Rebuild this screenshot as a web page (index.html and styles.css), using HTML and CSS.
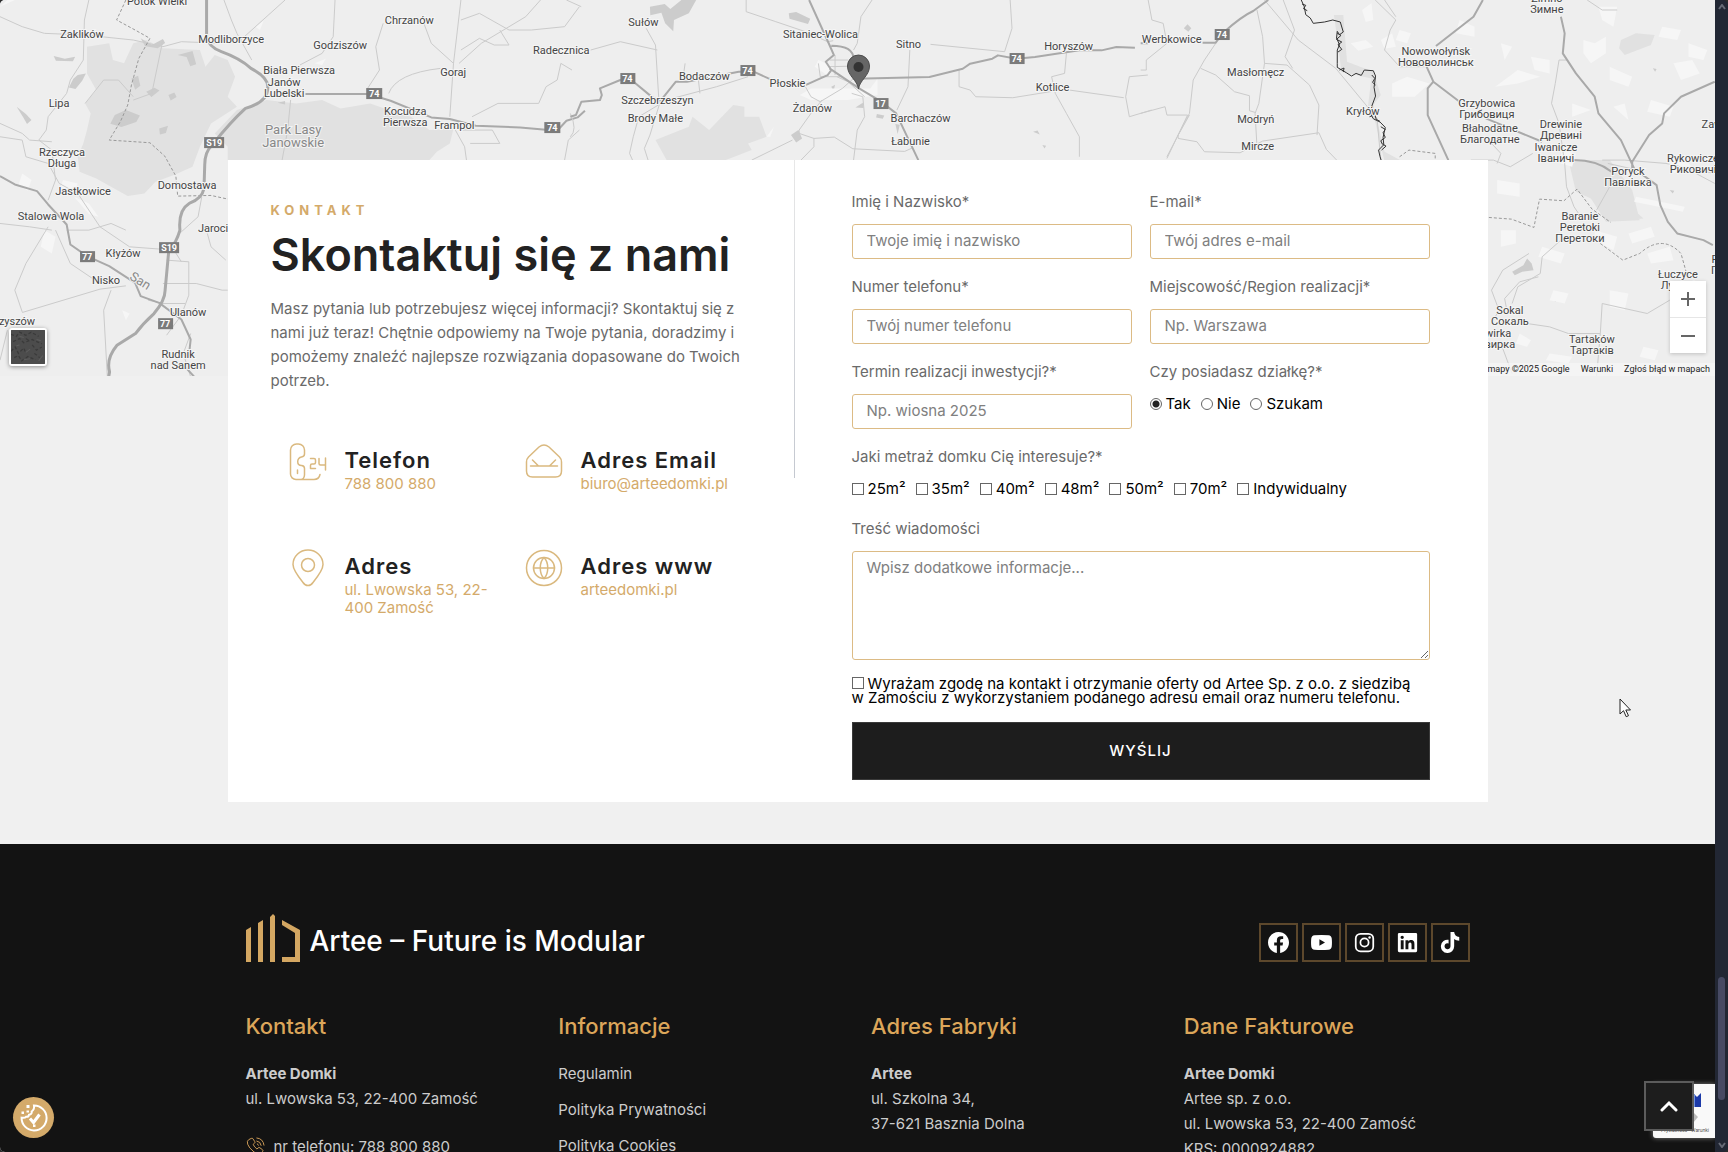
FILE: index.html
```html
<!DOCTYPE html>
<html lang="pl">
<head>
<meta charset="utf-8">
<title>Artee – Kontakt</title>
<meta name="viewport" content="width=device-width, initial-scale=1">
<link rel="stylesheet" href="styles.css">
</head>
<body>
<div class="window">
<div class="page">
  <section class="map" aria-label="Mapa">
    <svg class="map-canvas" viewBox="0 0 1714 376" preserveAspectRatio="xMidYMin slice">
      <rect width="1714" height="376" fill="#eeeeee"/>
      <!-- west -->
      <g transform="scale(.37 .33333)">
        <g class="forest">
          <path d="M235 140L295 130 305 180 335 190 360 130 395 120 440 145 540 150 555 200 580 165 615 180 635 230 615 290 640 320 570 370 540 440 520 500 470 525 420 545 390 580 345 588 300 560 260 535 215 515 210 470 225 430 235 390 245 340 230 310 260 270 235 220Z"/>
          <path d="M720 300L800 310 870 300 920 325 1000 310 1050 330 1110 350 1160 390 1225 385 1215 430 1180 455 1160 480H615V440L580 400 640 330Z"/>
        </g>
        <g class="lake">
          <path d="M210 225l22-5-10 22-18 25-18-5 12-26zM310 345l30-15 38 16-10 20-40 15-30-10zM480 165l40-12 10 40-16 6-10-28zM395 275l22-12 14 8-22 20zM430 385l24-8-6 22-16 4zM455 285l16-8 6 14-16 10zM355 235l18-8 6 30-14 12zM45 320l25 22 15 18-12 12-10-20zM145 168l30 8 28-6-6 14-46-2zM750 308l20-5v10zM380 115l30 20 30-18 6 12-20 16-34-6z"/>
        </g>
        <g class="patch"><path d="M60 520l25 20-10 32-25-18zM170 540l40 10-8 30-40-10zM120 690l30 20-10 50-30-20zM850 190l30-14-10 20zM690 80l22-18-10 28zM200 590l40 20 26 40-26-8zM330 930l20 10-10 20zM0 20l20-20h20z"/></g>
        <g class="minor">
          <path d="M240 0L228 60 225 180 190 240 180 280 130 350 125 390 105 420 140 450 150 540 130 600M0 50l60 30 60 20 110 5 130 15 80 20 50-15 90 4 60-18M605 0l20 60 15 40 40 80M770 0l-60 60-60 60M905 0l-5 110-30 50-60 35M0 370l60 30 20 20 60 5M0 410l60 10 10 50 60 20 30 60 50 30 60 100 80 60 120 10 20 35M785 300l-8 90-15 90M990 270l35-60-10-70 20-70M1050 280q20-60 140-75M1225 190l20-190M1225 190l-60-60-20-60M1240 190l60-60 120-80 40-50M1225 190l-10 160M1245 60l50-20 80 50 60 0 90-10 40-60M1350 90l25 45-40 0-40-20-50 35M1545 210l-30-20-10 50-30 20-20 50-110 0-70 40M1230 390l25 50 5 40M1250 390l80 0 20 40-80 0M1530 0l40 20M1525 480l10-60 30-30M0 670l80 10 60 10M130 680l-60 110-30 80 20 65M60 937l210-70 70-10M150 690l40 100 80 60M440 850l90 0 70 20h15M450 780l60 5 0 100-20 60-40 60M290 1130l-10-200 20-60M545 590l-10 60-60 60M560 700l10 40 40 40M400 900l40 10 60 0M180 690l60 0 60-20 40 20M515 1000l-20 60 20 70M640 490l-10 20M0 1080l20-90"/>
          <path d="M230 310l50-70 40 0 40 50M440 120l-30 160-50 20"/>
        </g>
        <path class="dash" d="M340 0l-25 60 50 30 40 25-30 60-20 80-10 60-20 50-30 55 110 8 40 40 30 60 5 60 90-2 50 12h40"/>
        <g class="major">
          <path d="M0 528l40 25 60 20 30 40 50 60 10 60 45 35 60 30 70 50 15 40 50 20 60 50 25 60 -5 50M825 282h170l60 20 110 50 50 5 70 20 120 5 100 10 25-30 30-10 20-20M500 1100l25 30"/>
        </g>
        <g class="motorway"><path d="M558 0v110q5 30 40 45 50 20 80 50 50 30 45 60 0 40-60 60-40 40-90 110-20 20-20 60l-2 70q-5 30-40 45-30 20-25 80-10 40-30 60l-10 120q0 30-30 70-30 30-50 60l-50 35q-30 40-20 80l-10 60"/></g>
      </g>
      <!-- centre -->
      <g transform="translate(570) scale(.37 .33333)">
        <g class="forest"><path d="M230 420L320 380 330 350 375 390 440 315 470 320 470 350 510 350 530 410 480 430 490 450 420 480H260z"/></g>
        <g class="lake"><path d="M215 20l40-8 15 15 30-27h40l-20 40-40 20-2 34-22-24-10-32-30 8zM590 40l20-4 38 20-6 16-50-16zM596 405l20-15 10 25-16 12zM770 322l20-14 2 16zM828 342l20 4-4 10-18-4zM878 372l12 2-6 28zM1250 395l12-4 6 12zM1275 435l10 2-4 8zM705 260l10-6-4 20z"/></g>
        <g class="patch"><path d="M620 285l30-20 160 0 20-30 0 50-80 15-100 0zM530 410l20-30-10 30zM660 200l10-20 40 20-10 30z"/></g>
        <g class="minor">
          <path d="M475 0v35l80 30 80 30 60 30 15-3M815 0l-30 50-10 80-10 20M1188 0l5 85-20 70-200-22M1050 210v50l30 10 15 20 100 3 140-25 160 25M917 150l-5 110-30 70M1340 160l-5 60-35 10 10 50 30 60 35 70v60M1560 225l-50 5-10 60 10 60 60-20M205 85l25 50 10 180M55 150l80-25 100 25M245 310l-60 40-15 60-10 50 8 20M240 315l-25 90-15 40 10 35M225 310l170-50 85-30M345 230l5 50M635 260l15 30 25 15 60-40 30-30M680 300l-30 40-32 50 0 10 40 15 0 25-35 40M490 480l110-60M658 415l55-4 50 35 140 8 20-10M760 280l30 10 5 60-20 40-10 90M670 190l5 40 60 0 60 60M715 165v60M310 190l-5 40M0 340q20 50 0 70"/>
          <path d="M700 200l70-2M700 180l50 0M720 230l60 30"/>
        </g>
        <g class="major">
          <path d="M0 350l15-5 15-40 50-5 5-15-5-20 55-25h30l60 55 20 5 40-55h30l140-30h40l40 20 15 5M635 255l60-30 10-15-15-25 22-20-12-30-55-135M705 137q60 0 60 40M770 236l200-5 90-25 20-15 60-15 15-10 50 10 50-5 120-20h60l40-10 50 2M700 205l80 60 60 40 40 35 60 140"/>
        </g>
      </g>
      <!-- east -->
      <g transform="translate(1140) scale(.375 .33333)">
        <g class="forest"><path d="M515 45h25l10 140 70 30 20 70-20 30 30 140 50 30h-50l-25-120-20-40 10-90-80-20-10-90zM1140 480h110l60 90 20 90-90 5-40-70-40-20zM1280 120l40-20 50 5-10 30-70 30-15-20zM1240 665l20-50 60 20 20 20z"/></g>
        <g class="lake"><path d="M115 85l10-12 10 12-8 10zM990 815l30-20 10-20 12 15 5 20-30 5-20 10zM1410 570l12 2-4 8zM1365 205l10 2-4 8zM1100 900l10-5-4 10z"/></g>
        <g class="patch">
          <path d="M560 130l40-10 20 20-40 12zM640 120l30-20 10 40-30 6zM590 30l25-20 5 50-20 6zM690 90l30 10-10 30-30-10zM850 60l40 20 0 30-50-10zM945 260l60-50 60 20-60 20zM1040 170l50 10 0 40-40-10zM960 130l30 10-20 40zM1180 120l30 10 30-20 0 50-40 30-20-30zM1250 200l60 30-10 30-50-20zM1420 190l50-10 20 40-50 20zM1360 300l60 20-10 30-60-15zM1220 20l50 0-10 60-30-20zM1390 80l50 10-10 30-50-10zM1460 130l50 20-10 30-40-10zM1120 450l40 10-10 40-30-10zM950 540l60 10 0 40-60-10zM1320 590l130 30-5 15-130-30zM1070 740l60 20-10 30-60-20zM1210 690l60 20-10 40-50-30zM1300 700l60-20 10 30-60 20zM1350 760l60-20 10 40-60 10zM960 690l40 0 0 40-40 10zM1100 870l40 10-10 30-40-10zM1250 870l50 10-10 50-40-10zM1400 480l40-10 30 30-50 20zM1090 1060l60 10-10 20-60-10zM1340 1040l40 10-10 30-40-10zM1200 330l-50-20 0 40zM670 250l40-20 60 20-40 40-60 0zM1010 1000l30 20-10 20-30-10zM1300 360l-40-40 30-10z"/>
        </g>
        <g class="minor">
          <path d="M310 30l15 80 5 80-15 120-10 30 5 100M330 0l90 120 100 85 110 150 10 125M0 210h15v-30l55-50-10-60-30-10-10-60M0 340l65-20 5 25 55 0-55 130M70 470l60-130 10-100 30-60 30-50M130 345l-30 60 0 10 50 10 20 30 95 3 60-35 150-25 20 50 60 70M160 205l40 20 50 50 40 12 0 45 15 5M330 190l60 5 60 60 25 60-5 90M380 0l30 90-25 80 20 35M625 0l55 60-15 30-15 60 40 50 70 0M650 0l30 50M1135 180h-20l-10 70-10 60 20 60 15 120 5 70 20 60 15 25M880 480l60 0 45 20 60-40M935 430l25 30-10 30M1230 480h60l110 10 80 20 50 10M1120 720l-50 50-5 50-60 40-15 50M1060 830l-50 15-40 50 5 30M1030 970l60 10 50 20 85 0M1225 1000l5-90 120 30 60-40M1225 1000l-10 130M960 1030l30 90M1255 550l-40 80M935 870l30-60 70-50M1245 490l80 20M1480 520l50 30M1190 0l40 30 40 0M935 870l20 60-20 40"/>
        </g>
        <path class="dash" d="M928 652l60 5 60 25 15-85 65 5 35-35 40 60 50 40M1225 730l60 50 45-20q60-60 110 0l15 60M690 470l25-20 70 10 0 20"/>
        <g class="major">
          <path d="M0 130l20 0M165 128h35l20-30q50-50 80-65l40-33M912 0l-25 50-100 88M762 200l18 45-15 20v80l55 135M780 245l70 60M920 355l150 70M1155 480q60 0 100 35M1120 50l10 50-5 60 35 60 50 70 10 50 60 80 35 85 60 50 10 60 20 50 25 35 70 20 25 15M1310 485l45-80 35-35 5-30 45-50 90-45M1310 480v30"/>
        </g>
        <path class="border" d="M428 0l8 20 4 24 12 10 8 16 30-4 22-6 20 6 8 30-10 8-6-10-2 20 8 20-6 16 0 40 0 12 24 16 14 10 12-8 14 6 8-16 24 2 6 16-4 34 4 26-10 30-2 26 6 12 18 10 14 16-6 30 2 22-14 16 4 20 8 28"/>
        <path class="border" d="M430 12l10 4-6 10 10 6M524 100l10 6-12 12 14 8-10 8 10 14-10 8M530 210l12-6-2 12M616 225l8 10-6 12 8 8M610 350l14-6 4 14 10 6M640 380l12 8-6 10 6 14-12 10 4 10 10 6-12 12"/>
      </g>
      <g class="shield">
        <rect x="366" y="88" width="16" height="11"/><rect x="544" y="122" width="16" height="11"/><rect x="204" y="137" width="20" height="11"/><rect x="159" y="242" width="20" height="11"/><rect x="80" y="251" width="15" height="11"/><rect x="158" y="318" width="15" height="11"/><rect x="620" y="73" width="15" height="11"/><rect x="740" y="65" width="15" height="11"/><rect x="1009" y="53" width="15" height="11"/><rect x="873" y="98" width="15" height="11"/><rect x="1214" y="29" width="15" height="11"/>
      </g>
      <g class="shield-text">
        <text x="374" y="97">74</text><text x="552" y="131">74</text><text x="214" y="146">S19</text><text x="169" y="251">S19</text><text x="87" y="260">77</text><text x="165" y="327">77</text><text x="627" y="82">74</text><text x="747" y="74">74</text><text x="1016" y="62">74</text><text x="880" y="107">17</text><text x="1221" y="38">74</text>
      </g>
      <g class="place">
        <text x="157" y="5">Potok Wielki</text><text x="82" y="38">Zaklików</text><text x="231" y="43">Modliborzyce</text><text x="340" y="49">Godziszów</text><text x="409" y="24">Chrzanów</text><text x="561" y="54">Radecznica</text><text x="299" y="74">Biała Pierwsza</text><text x="284" y="86">Janów</text><text x="284" y="97">Lubelski</text><text x="453" y="76">Goraj</text><text x="59" y="107">Lipa</text><text x="405" y="115">Kocudza</text><text x="405" y="126">Pierwsza</text><text x="454" y="129">Frampol</text><text x="62" y="156">Rzeczyca</text><text x="62" y="167">Długa</text><text x="187" y="189">Domostawa</text><text x="83" y="195">Jastkowice</text><text x="51" y="220">Stalowa Wola</text><text x="216" y="232">Jarocin</text><text x="123" y="257">Kłyżów</text><text x="106" y="284">Nisko</text><text x="188" y="316">Ulanów</text><text x="17" y="325">zyszów</text><text x="178" y="358">Rudnik</text><text x="178" y="369">nad Sanem</text>
        <text x="643" y="26">Sułów</text><text x="820" y="38">Sitaniec-Wolica</text><text x="908" y="48">Sitno</text><text x="1068" y="50">Horyszów</text><text x="704" y="80">Bodaczów</text><text x="787" y="87">Płoskie</text><text x="1052" y="91">Kotlice</text><text x="657" y="104">Szczebrzeszyn</text><text x="655" y="122">Brody Małe</text><text x="812" y="112">Żdanów</text><text x="920" y="122">Barchaczów</text><text x="910" y="145">Łabunie</text>
        <text x="1171" y="43">Werbkowice</text><text x="1255" y="76">Masłomęcz</text><text x="1255" y="123">Modryń</text><text x="1257" y="150">Mircze</text><text x="1362" y="115">Kryłów</text><text x="1435" y="55">Nowowołyńsk</text><text x="1435" y="66">Нововолинськ</text><text x="1546" y="2">Zimno</text><text x="1546" y="13">Зимне</text><text x="1486" y="107">Grzybowica</text><text x="1486" y="118">Грибовиця</text><text x="1489" y="132">Błahodatne</text><text x="1489" y="143">Благодатне</text><text x="1560" y="128">Drewinie</text><text x="1560" y="139">Древині</text><text x="1555" y="151">Iwanicze</text><text x="1555" y="162">Іваничі</text><text x="1692" y="162">Rykowicze</text><text x="1692" y="173">Риковичі</text><text x="1627" y="175">Poryck</text><text x="1627" y="186">Павлівка</text><text x="1579" y="220">Baranie</text><text x="1579" y="231">Peretoki</text><text x="1579" y="242">Перетоки</text><text x="1677" y="278">Łuczyce</text><text x="1677" y="289">Лучиці</text><text x="1509" y="314">Sokal</text><text x="1509" y="325">Сокаль</text><text x="1494" y="337">Żwirka</text><text x="1494" y="348">Жвирка</text><text x="1591" y="343">Tartaków</text><text x="1591" y="354">Тартаків</text><text x="1711" y="128">Zaw</text><text x="1714" y="263">P</text><text x="1714" y="274">П</text>
      </g>
      <g class="park"><text x="293" y="134">Park Lasy</text><text x="293" y="147">Janowskie</text><text x="140" y="285" transform="rotate(32 140 281)">San</text></g>
      <path d="M858 89C857 80 847 76 847 66a11 11 0 0 1 22 0c0 10-10 14-11 23z" fill="#666" stroke="#4b4b4b"/>
      <circle cx="858" cy="67" r="5" fill="#333"/>
    </svg>
    <button class="layer" type="button" aria-label="Widok satelitarny">
      <svg viewBox="0 0 32 32"><rect width="32" height="32" fill="#4c4c4c"/><path d="M0 4l5 2 3-4 6 3 5-3 7 4M2 11l6-3 4 4 8-3 9 4M0 20l4-4 3 6 5-5 2 5M3 26l4-2 3 5 6-4 7 3M20 14l4 5 5-3M14 8l3 2M22 22l5 4" stroke="#3a3a3a" stroke-width="1.2" stroke-dasharray="3 2" fill="none"/><path d="M8 6l4 1M18 18l-4 3M24 9l4 1M12 28l6-1M26 29l4-5M5 15l3-1" stroke="#5c5c5c" fill="none"/></svg>
    </button>
    <div class="zoom">
      <button type="button" aria-label="Powiększ"><svg viewBox="0 0 16 16"><path d="M8 1v14M1 8h14"/></svg></button>
      <button type="button" aria-label="Pomniejsz"><svg viewBox="0 0 16 16"><path d="M1 8h14"/></svg></button>
    </div>
    <div class="legal"><span>Dane mapy ©2025 Google</span><a href="#">Warunki</a><a href="#">Zgłoś błąd w mapach</a></div>
  </section>

  <main class="contact">
    <section class="intro">
      <p class="eyebrow">KONTAKT</p>
      <h1>Skontaktuj się z nami</h1>
      <p class="lead">Masz pytania lub potrzebujesz więcej informacji? Skontaktuj się z<br>nami już teraz! Chętnie odpowiemy na Twoje pytania, doradzimy i<br>pomożemy znaleźć najlepsze rozwiązania dopasowane do Twoich<br>potrzeb.</p>
      <div class="cards">
        <article class="item">
          <svg class="item-icon" viewBox="0 0 38 38"><path d="M15.500 7a6 6 0 0 0-6-6h-2a6 6 0 0 0-6 6v24a5.500 5.500 0 0 0 5.500 5.500h18q5 0 6-5M15.500 7v4q0 2.500-3 3-3.500.6-3.800 4.500 0 4 3.800 4 3 .2 3 3V32q-.3 4-3.500 4.500M8.500 27v3.500"/><path d="M21.500 15.500H25q1.500 0 1.500 1.500v2.500q0 1.500-1.500 1.500h-2q-1.500 0-1.500 1.500v3h5M30 15.500v5q0 1.500 1.500 1.500h5M36.500 15v12"/></svg>
          <div><h2>Telefon</h2><a href="tel:788800880">788 800 880</a></div>
        </article>
        <article class="item">
          <svg class="item-icon" viewBox="0 0 38 38"><path d="M1.500 19q0-3 2-5L14 4q5-4 10 0l10.500 10q2 2 2 5v9q0 6-6 6h-23q-6 0-6-6zM5.500 23h27M7.500 17l6 6M30.500 17l-6 6"/></svg>
          <div><h2>Adres Email</h2><a href="mailto:biuro@arteedomki.pl">biuro@arteedomki.pl</a></div>
        </article>
        <article class="item">
          <svg class="item-icon" viewBox="0 0 38 38"><path d="M19 36.500q-3 0-5-3Q4 21 4 15.500a15 14.500 0 0 1 30 0Q34 21 24 33.500q-2 3-5 3z"/><circle cx="19" cy="16" r="6.500"/></svg>
          <div><h2>Adres</h2><a href="#">ul. Lwowska 53, 22-<br>400 Zamość</a></div>
        </article>
        <article class="item">
          <svg class="item-icon" viewBox="0 0 38 38"><circle cx="19" cy="19" r="17.500"/><circle cx="19" cy="19" r="10.500"/><path d="M8.500 19h21M19 8.500c-5 5-5 16 0 21M19 8.500c5 5 5 16 0 21"/></svg>
          <div><h2>Adres www</h2><a href="#">arteedomki.pl</a></div>
        </article>
      </div>
    </section>

    <form class="form">
      <div class="field"><label for="name">Imię i Nazwisko*</label><input id="name" type="text" placeholder="Twoje imię i nazwisko"></div>
      <div class="field"><label for="mail">E-mail*</label><input id="mail" type="email" placeholder="Twój adres e-mail"></div>
      <div class="field"><label for="tel">Numer telefonu*</label><input id="tel" type="tel" placeholder="Twój numer telefonu"></div>
      <div class="field"><label for="region">Miejscowość/Region realizacji*</label><input id="region" type="text" placeholder="Np. Warszawa"></div>
      <div class="field"><label for="term">Termin realizacji inwestycji?*</label><input id="term" type="text" placeholder="Np. wiosna 2025"></div>
      <fieldset class="field"><legend>Czy posiadasz działkę?*</legend>
        <div class="options">
          <label><input type="radio" name="plot" checked>Tak</label><label><input type="radio" name="plot">Nie</label><label><input type="radio" name="plot">Szukam</label>
        </div>
      </fieldset>
      <fieldset class="field wide"><legend>Jaki metraż domku Cię interesuje?*</legend>
        <div class="options">
          <label><input type="checkbox">25m²</label><label><input type="checkbox">35m²</label><label><input type="checkbox">40m²</label><label><input type="checkbox">48m²</label><label><input type="checkbox">50m²</label><label><input type="checkbox">70m²</label><label><input type="checkbox">Indywidualny</label>
        </div>
      </fieldset>
      <div class="field wide"><label for="msg">Treść wiadomości</label><textarea id="msg" placeholder="Wpisz dodatkowe informacje..."></textarea></div>
      <label class="consent wide"><input type="checkbox">Wyrażam zgodę na kontakt i otrzymanie oferty od Artee Sp. z o.o. z siedzibą<br>w Zamościu z wykorzystaniem podanego adresu email oraz numeru telefonu.</label>
      <button class="submit wide" type="submit">WYŚLIJ</button>
    </form>
  </main>

  <footer class="footer">
    <div class="footer-inner">
      <div class="brand-row">
        <a class="brand" href="#">
          <svg viewBox="0 0 54 48"><path d="M0 16l5-3v35H0zM12 9l5-3v42h-5zM24 3l3-3 2 2v46h-5zM36 6l18 10v32H36v-5h13V19L36 11z"/></svg>
          <span>Artee – Future is Modular</span>
        </a>
        <nav class="social" aria-label="Media społecznościowe">
          <a href="#" aria-label="Facebook"><svg viewBox="0 0 24 24"><path fill-rule="evenodd" d="M24 12.070C24 5.400 18.630 0 12 0S0 5.400 0 12.070C0 18.100 4.390 23.090 10.130 24v-8.440H7.080v-3.490h3.050V9.410c0-3.020 1.790-4.690 4.530-4.690 1.310 0 2.680.24 2.680.24v2.970h-1.510c-1.490 0-1.960.93-1.960 1.890v2.250h3.330l-.53 3.490h-2.800V24C19.610 23.090 24 18.100 24 12.070z"/></svg></a>
          <a href="#" aria-label="YouTube"><svg viewBox="0 0 24 24"><path fill-rule="evenodd" d="M4 3.800Q12 3.200 20 3.800 23.300 4 23.700 7.500q.5 4.500 0 9-.4 3.500-3.700 3.700-8 .6-16 0Q.7 20 .3 16.500q-.5-4.500 0-9Q.7 4 4 3.800zM9.600 8.300v7.400L16 12z"/></svg></a>
          <a href="#" aria-label="Instagram"><svg viewBox="0 0 24 24"><path fill-rule="evenodd" d="M7.500 1h9A6.500 6.500 0 0 1 23 7.500v9a6.500 6.500 0 0 1-6.500 6.500h-9A6.500 6.500 0 0 1 1 16.500v-9A6.500 6.500 0 0 1 7.500 1zm0 2A4.500 4.500 0 0 0 3 7.500v9A4.500 4.500 0 0 0 7.500 21h9a4.500 4.500 0 0 0 4.500-4.500v-9A4.500 4.500 0 0 0 16.500 3zM12 6.300a5.700 5.700 0 1 1 0 11.400 5.700 5.700 0 0 1 0-11.400zm0 2a3.700 3.700 0 1 0 0 7.400 3.700 3.700 0 0 0 0-7.400z"/><circle cx="17.800" cy="6.200" r="1.400"/></svg></a>
          <a href="#" aria-label="LinkedIn"><svg viewBox="0 0 24 24"><path fill-rule="evenodd" d="M2.500 1h19A1.500 1.500 0 0 1 23 2.500v19a1.500 1.500 0 0 1-1.500 1.500h-19A1.500 1.500 0 0 1 1 21.500v-19A1.500 1.500 0 0 1 2.500 1zM4.300 9.400v10.400h3.300V9.400zM5.950 4.200a1.900 1.900 0 1 0 0 3.800 1.900 1.900 0 0 0 0-3.800zM9.700 9.400v10.400H13v-5.200c0-1.400.4-2.600 1.900-2.600s1.700 1.400 1.700 2.700v5.100h3.300v-5.700c0-2.800-.7-4.900-4-4.900-1.500 0-2.500.8-2.900 1.600V9.400z"/></svg></a>
          <a href="#" aria-label="TikTok"><svg viewBox="0 0 24 24"><path d="M12 0h4.200c.2 3 2.300 5.400 5.800 5.800v4.100c-2.200 0-4.200-.6-5.800-1.800v8.300A7.600 7.600 0 1 1 9.800 8.900v4.200a3.400 3.400 0 1 0 2.200 3.200z"/></svg></a>
        </nav>
      </div>
      <div class="columns">
        <section><h3>Kontakt</h3><p><strong>Artee Domki</strong><br>ul. Lwowska 53, 22-400 Zamość</p>
          <a class="phone" href="tel:788800880"><svg viewBox="0 0 20 20"><path d="M5.500 1.500q1-.6 1.800.3l1.900 3q.6 1-.3 1.800L7.500 7.800q1.300 2.800 4 4.800l1.400-1.200q.9-.7 1.800 0l2.700 2q.9.9.1 1.900-1.700 2.400-4.500 2.500Q8.500 17 4 11.500.7 7 1.500 4.500q.8-2 4-3zM11 1q7 .6 8 8M11 4.200q4.400.5 5 5M11.500 7.200q1.400.4 1.700 1.800"/></svg>nr telefonu: 788 800 880</a></section>
        <section><h3>Informacje</h3><ul><li><a href="#">Regulamin</a></li><li><a href="#">Polityka Prywatności</a></li><li><a href="#">Polityka Cookies</a></li></ul></section>
        <section><h3>Adres Fabryki</h3><p><strong>Artee</strong><br>ul. Szkolna 34,<br>37-621 Basznia Dolna</p></section>
        <section><h3>Dane Fakturowe</h3><p><strong>Artee Domki</strong><br>Artee sp. z o.o.<br>ul. Lwowska 53, 22-400 Zamość<br>KRS: 0000924882</p></section>
      </div>
    </div>
  </footer>

  <button class="cookie" type="button" aria-label="Ustawienia cookies"><svg viewBox="0 0 28 28"><path d="M14 1.500a12.500 12.500 0 1 1-12.400 12.200q3.400.5 4.400-.9 2.700.3 3-2 3.200-.5 2.700-3.300 3-2.200 2.300-6z"/><path d="M10 14.500l3.500 4 6-8" stroke-width="3"/><path class="dots" d="M6.500 1h3v3h-3zM1.500 7.500H4V10H1.500zM6.500 6.500H9v2H6.500zM13 20.500h2.500V23H13z"/></svg></button>
  <div class="recaptcha"><svg viewBox="0 0 62 54"><path d="M36 9h4l4 4 4-4v14H36z" fill="#1c3aa9"/><path d="M36 9h4l2 2v12h-6z" fill="#6f93e0"/><path d="M40 28l5 5-5 6z" fill="#bbb"/></svg><span>Prywatność - Warunki</span></div>
  <button class="to-top" type="button" aria-label="Do góry"><svg viewBox="0 0 18 12"><path d="M2 10l7-7 7 7"/></svg></button>
  <svg class="cursor" viewBox="0 0 12 20"><path d="M1 1v15l3.500-3.300 2.700 6 2.300-1-2.700-5.700h4.700z"/></svg>
</div>
<div class="scrollbar" aria-hidden="true"><svg viewBox="0 0 8 6"><path d="M1 5l3-4 3 4"/></svg><i></i><svg viewBox="0 0 8 6"><path d="M1 1l3 4 3-4"/></svg></div>
</div>
</body>
</html>
```
FILE: styles.css
```css
* { box-sizing: border-box; }
html { background: #2c2c2c; }
body { margin: 0; font: 400 15px/20px Inter, sans-serif; color: #6a6a6a; }
h1, h2, h3, p, ul, fieldset, legend { margin: 0; padding: 0; border: 0; }
ul { list-style: none; }
a { color: inherit; text-decoration: none; }
button, input, textarea { font: inherit; }
button { padding: 0; cursor: pointer; }

.window { display: flex; height: 100vh; overflow: hidden; border-radius: 5px; background: #222734; }
.page { position: relative; flex: 1; min-width: 0; overflow: hidden; background: #f0f0f0; }
.scrollbar { position: relative; width: 13px; display: flex; flex-direction: column; align-items: center; justify-content: space-between; padding: 4px 0; }
.scrollbar svg { width: 8px; height: 6px; fill: none; stroke: #666a76; stroke-width: 2; }
.scrollbar i { position: absolute; bottom: 52px; height: 123px; width: 7px; border-radius: 4px; background: #474a63; }

/* Map */
.map { position: relative; height: 376px; overflow: hidden; }
.map-canvas { display: block; width: 100%; height: 100%; }
.map-canvas path { vector-effect: non-scaling-stroke; }
.forest { fill: #e1e1e1; }
.lake { fill: #cccccc; }
.patch { fill: #f6f6f6; }
.minor, .major, .motorway, .dash, .border { fill: none; stroke-linejoin: round; }
.minor { stroke: #cbcbcb; stroke-width: 1; }
.major { stroke: #a9a9a9; stroke-width: 2; }
.motorway { stroke: #a9a9a9; stroke-width: 3; }
.dash { stroke: #999; stroke-width: 1; stroke-dasharray: 3 2; }
.border { stroke: #333; stroke-width: 1; }
.shield { fill: #7b7b7b; }
.shield-text { fill: #fff; font: 700 9px Roboto, sans-serif; text-anchor: middle; }
.place { fill: #444; font: 400 11px Roboto, sans-serif; text-anchor: middle; stroke: #f5f5f5; stroke-width: 2; paint-order: stroke; }
.park { fill: #888; font: 400 13px Roboto, sans-serif; text-anchor: middle; stroke: #f2f2f2; stroke-width: 2; paint-order: stroke; }
.layer { position: absolute; left: 9px; bottom: 10px; width: 38px; height: 38px; border: 2px solid #fff; border-radius: 3px; overflow: hidden; background: #484848; box-shadow: 0 1px 4px rgba(0,0,0,.4); }
.layer svg { display: block; width: 34px; height: 34px; }
.zoom { position: absolute; right: 9px; bottom: 23px; width: 36px; background: #fff; box-shadow: 0 1px 4px rgba(0,0,0,.2); }
.zoom button { display: grid; place-items: center; width: 100%; height: 36px; border: 0; background: none; }
.zoom button + button { border-top: 1px solid #e6e6e6; }
.zoom svg { width: 16px; height: 16px; stroke: #666; stroke-width: 2; }
.legal { position: absolute; right: 0; bottom: 0; display: flex; gap: 11px; padding: 0 5px; height: 13px; font: 400 9px/13px Roboto, sans-serif; color: #222; background: rgba(245,245,245,.8); }

/* Contact card */
.contact { position: relative; display: grid; grid-template-columns: 45% 1fr; width: 1260px; max-width: 100%; margin: -216px auto 42px; background: #fff; }
.intro { padding: 40px 30px 0 43px; background: linear-gradient(#e8e8e8, #c4c8d0) no-repeat right top / 1px 318px; }
.eyebrow { font-size: 13px; font-weight: 700; letter-spacing: 5px; color: #d4aa6a; }
h1 { margin-top: 7px; font-size: 45px; line-height: 56px; font-weight: 600; color: #222; white-space: nowrap; }
.lead { margin-top: 14px; line-height: 24px; white-space: nowrap; }
.cards { display: grid; grid-template-columns: 236px 1fr; row-gap: 44px; margin: 50px 0 0 18px; }
.item { display: flex; gap: 18px; min-height: 62px; white-space: nowrap; }
.item-icon { flex: none; width: 38px; height: 38px; fill: none; stroke: #dab97f; stroke-width: 1.500; stroke-linecap: round; stroke-linejoin: round; }
.item h2 { margin-top: 2px; font-size: 22px; line-height: 30px; font-weight: 600; letter-spacing: 1px; color: #222; }
.item a { display: block; line-height: 18px; color: #d4aa6a; }

.form { display: grid; grid-template-columns: 1fr 1fr; gap: 18px; padding: 32px 58px 22px 57px; }
.wide { grid-column: 1 / -1; }
.field { display: flex; flex-direction: column; gap: 12px; min-width: 0; }
fieldset.field { display: block; }
legend { margin-bottom: 12px; }
.field input[type="text"], .field input[type="email"], .field input[type="tel"] { height: 35px; }
.field > input, textarea { width: 100%; padding: 0 14px 2px; border: 1px solid #dcbb85; border-radius: 3px; background: #fff; color: #444; outline: 0; }
textarea { display: block; height: 109px; padding-top: 6px; resize: vertical; }
::placeholder { color: #808080; opacity: 1; }
.options { display: flex; flex-wrap: wrap; gap: 10px; height: 22px; color: #000; }
.options label { display: flex; gap: 4px; align-items: center; height: 20px; }
input[type="checkbox"], input[type="radio"] { appearance: none; flex: none; width: 12px; height: 12px; margin: 0; border: 1px solid #666; background: #fff; }
input[type="radio"] { border-radius: 50%; }
input[type="radio"]:checked { background: radial-gradient(circle, #222 0 3px, #fff 4px); }
.consent { margin: -1px 0; line-height: 14px; color: #000; white-space: nowrap; }
.consent input[type="checkbox"] { margin-right: 4px; vertical-align: baseline; }
.submit { height: 58px; border: 1px solid #3a3a3a; background: #1d1d1d; color: #fff; font-weight: 500; letter-spacing: 1px; }

/* Footer */
.footer { padding: 70px 24px 40px; background: #131313; color: #ccc; }
.footer-inner { width: 1224px; max-width: 100%; margin: 0 auto; }
.brand-row { display: flex; justify-content: space-between; align-items: flex-end; }
.brand { display: flex; align-items: center; gap: 10px; color: #fff; font-size: 28px; line-height: 48px; font-weight: 500; }
.brand svg { width: 54px; height: 48px; fill: #d4a762; }
.brand span { padding-top: 6px; line-height: 42px; }
.social { display: flex; gap: 4px; }
.social a { display: grid; place-items: center; width: 39px; height: 39px; border: 2px solid #5d482c; }
.social svg { width: 21px; height: 21px; fill: #fff; }
.columns { display: grid; grid-template-columns: repeat(4, 1fr); margin-top: 50px; column-gap: 27px; line-height: 25px; white-space: nowrap; }
h3 { margin-bottom: 21px; font-size: 22px; line-height: 28px; font-weight: 500; color: #dca65a; }
.columns ul { display: grid; gap: 11px; }
.phone { display: flex; gap: 9px; align-items: center; margin-top: 23px; }
.phone svg { width: 19px; height: 19px; fill: none; stroke: #d4a05a; }

/* Floating controls */
.cookie { position: absolute; left: 13px; bottom: 14px; display: grid; place-items: center; width: 41px; height: 41px; border: 0; border-radius: 50%; background: #d4aa6a; }
.cookie svg { width: 28px; height: 28px; fill: none; stroke: #fff; stroke-width: 2; }
.cookie .dots { fill: #fff; stroke: none; }
.recaptcha { position: absolute; right: 0; bottom: 14px; width: 62px; height: 54px; background: #f9f9f9; border-radius: 3px 0 0 3px; box-shadow: 0 0 5px #808080; }
.recaptcha svg { display: block; width: 62px; height: 54px; }
.recaptcha span { position: absolute; left: 8px; bottom: 4px; font: 400 5px/8px Roboto, sans-serif; color: #555; }
.to-top { position: absolute; right: 21px; bottom: 21px; display: grid; place-items: center; width: 50px; height: 50px; border: 2px solid #5c5c5c; background: #1d1d1d; }
.to-top svg { width: 18px; height: 12px; fill: none; stroke: #fff; stroke-width: 3; stroke-linecap: round; }
.cursor { position: absolute; right: 84px; top: 698px; width: 12px; height: 20px; fill: #fff; stroke: #222; }
```
